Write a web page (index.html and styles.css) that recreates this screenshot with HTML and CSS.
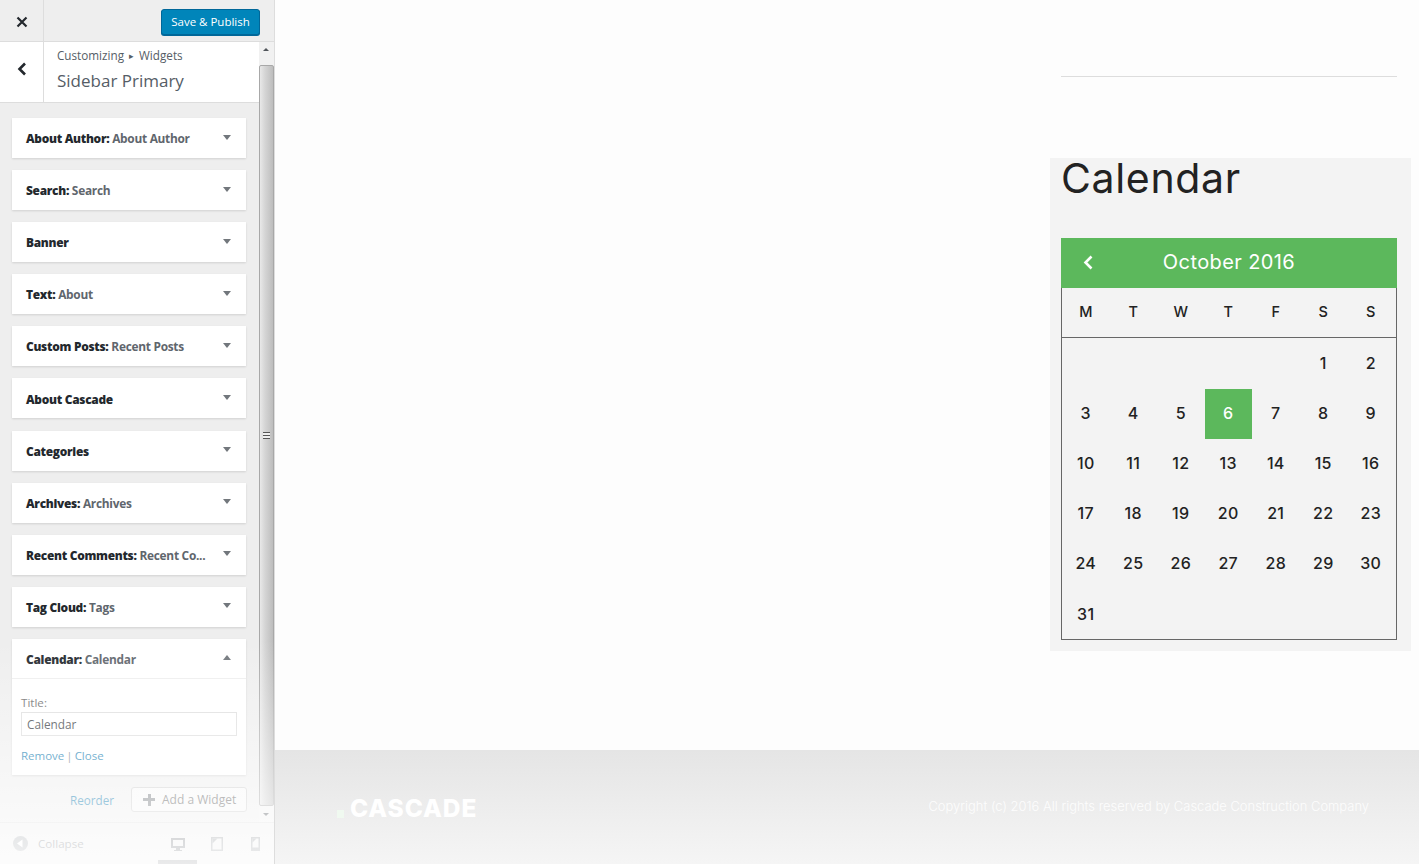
FILE: index.html
```html
<!DOCTYPE html>
<html lang="en">
<head>
    <meta charset="UTF-8">
    <title>Customize: Sidebar Primary</title>
    <link rel="stylesheet" href="styles.css">
</head>
<body>

<div class="app">
    <aside class="sidebar">
        <header class="top-bar">
            <a class="close-btn" href="#">
                <svg width="12" height="12" viewBox="0 0 12 12"><path d="M1.5 1.5l9 9M10.5 1.5l-9 9" stroke="#23282d" stroke-width="2.2" fill="none"/></svg>
            </a>
            <button class="publish-btn" type="button">Save &amp; Publish</button>
        </header>

        <div class="scroll-wrap">
            <div class="panel">
                <div class="panel-head">
                    <a class="back-btn" href="#">
                        <svg width="10" height="14" viewBox="0 0 10 14"><path d="M8 1.5L2.5 7L8 12.5" stroke="#23282d" stroke-width="2.6" fill="none"/></svg>
                    </a>
                    <div class="panel-title">
                        <div class="crumbs">Customizing <span class="crumb-sep">&#9656;</span> Widgets</div>
                        <div class="panel-name">Sidebar Primary</div>
                    </div>
                </div>

                <ul class="widgets">
                    <li class="widget"><div class="widget-top"><span><b>About Author:</b> About Author</span><i class="arrow"></i></div></li>
                    <li class="widget"><div class="widget-top"><span><b>Search:</b> Search</span><i class="arrow"></i></div></li>
                    <li class="widget"><div class="widget-top"><span><b>Banner</b></span><i class="arrow"></i></div></li>
                    <li class="widget"><div class="widget-top"><span><b>Text:</b> About</span><i class="arrow"></i></div></li>
                    <li class="widget"><div class="widget-top"><span><b>Custom Posts:</b> Recent Posts</span><i class="arrow"></i></div></li>
                    <li class="widget"><div class="widget-top"><span><b>About Cascade</b></span><i class="arrow"></i></div></li>
                    <li class="widget"><div class="widget-top"><span><b>Categories</b></span><i class="arrow"></i></div></li>
                    <li class="widget"><div class="widget-top"><span><b>Archives:</b> Archives</span><i class="arrow"></i></div></li>
                    <li class="widget"><div class="widget-top"><span><b>Recent Comments:</b> Recent Co...</span><i class="arrow"></i></div></li>
                    <li class="widget"><div class="widget-top"><span><b>Tag Cloud:</b> Tags</span><i class="arrow"></i></div></li>
                    <li class="widget">
                        <div class="widget-top open"><span><b>Calendar:</b> Calendar</span><i class="arrow up"></i></div>
                        <div class="widget-body">
                            <label class="field-label" for="title">Title:</label>
                            <input class="field" id="title" type="text" value="Calendar">
                            <div class="widget-links"><a href="#">Remove</a> | <a href="#">Close</a></div>
                        </div>
                    </li>
                </ul>

                <div class="widget-actions">
                    <a class="reorder" href="#">Reorder</a>
                    <button class="add-btn" type="button"><span class="plus"></span>Add a Widget</button>
                </div>
            </div>

            <div class="scrollbar">
                <i class="sb-arrow"></i>
                <div class="sb-thumb"><span class="sb-grip"></span></div>
                <i class="sb-arrow down"></i>
            </div>
        </div>

        <footer class="side-foot">
            <a class="collapse" href="#">
                <svg width="15" height="15" viewBox="0 0 15 15"><circle cx="7.5" cy="7.5" r="7.5" fill="#a0a5aa"/><path d="M9.5 3.5v8L4 7.5z" fill="#fff"/></svg>
                Collapse
            </a>
            <div class="devices">
                <span class="device active">
                    <svg width="16" height="15" viewBox="0 0 16 15"><path d="M1 1h14v10H1zM3 3v6h10V3zM6 11h4v2h2v1H4v-1h2z" fill="#656a70" fill-rule="evenodd"/></svg>
                </span>
                <span class="device">
                    <svg width="12" height="14" viewBox="0 0 12 14"><path d="M0 0h12v14H0zM1.5 1.5v11h9v-11z" fill="#8a8f94" fill-rule="evenodd"/><path d="M1.5 1.5h5l-5 5z" fill="#8a8f94"/></svg>
                </span>
                <span class="device">
                    <svg width="9" height="14" viewBox="0 0 9 14"><path d="M0 0h9v14H0zM1.5 1.5v9h6v-9z" fill="#8a8f94" fill-rule="evenodd"/><path d="M1.5 1.5h4l-4 4z" fill="#8a8f94"/></svg>
                </span>
            </div>
        </footer>
        <div class="side-fade"></div>
    </aside>

    <main class="preview">
        <div class="preview-main">
            <div class="right-col">
                <hr class="divider">
                <section class="cal-widget">
                    <h2 class="cal-title">Calendar</h2>
                    <div class="calendar">
                        <div class="cal-head">
                            <svg class="cal-prev" width="11" height="15" viewBox="0 0 11 15"><path d="M8.5 1.5L2.5 7.5l6 6" stroke="#fff" stroke-width="2.6" fill="none"/></svg>
                            October 2016
                        </div>
                        <div class="cal-grid cal-days">
                            <span>M</span><span>T</span><span>W</span><span>T</span><span>F</span><span>S</span><span>S</span>
                        </div>
                        <div class="cal-grid cal-dates">
                            <span></span><span></span><span></span><span></span><span></span><span>1</span><span>2</span>
                            <span>3</span><span>4</span><span>5</span><span class="today">6</span><span>7</span><span>8</span><span>9</span>
                            <span>10</span><span>11</span><span>12</span><span>13</span><span>14</span><span>15</span><span>16</span>
                            <span>17</span><span>18</span><span>19</span><span>20</span><span>21</span><span>22</span><span>23</span>
                            <span>24</span><span>25</span><span>26</span><span>27</span><span>28</span><span>29</span><span>30</span>
                            <span>31</span>
                        </div>
                    </div>
                </section>
            </div>
        </div>
        <footer class="site-foot">
            <div class="logo"><i class="logo-dot"></i>CASCADE</div>
            <div class="copyright">Copyright (c) 2016 All rights reserved by Cascade Construction Company</div>
        </footer>
    </main>
</div>

</body>
</html>
```

FILE: styles.css
```css
* {
    margin: 0;
    padding: 0;
    box-sizing: border-box;
}

body {
    font-family: 'Open Sans', sans-serif;
    background-color: #fdfdfd;
    overflow: hidden;
}

a {
    text-decoration: none;
}

.app {
    display: flex;
    height: 864px;
}

/* customizer sidebar */
.sidebar {
    position: relative;
    width: 275px;
    flex-shrink: 0;
    display: flex;
    flex-direction: column;
    background-color: #eeeeee;
    border-right: 1px solid #dddddd;
}

.top-bar {
    height: 42px;
    display: flex;
    justify-content: space-between;
    padding-right: 14px;
    border-bottom: 1px solid #dddddd;
}

.close-btn {
    width: 44px;
    height: 41px;
    display: flex;
    align-items: center;
    justify-content: center;
    padding-top: 2px;
    border-right: 1px solid #dddddd;
}

.publish-btn {
    width: 99px;
    height: 26px;
    margin-top: 9px;
    padding-bottom: 2px;
    background-color: #0085ba;
    color: #fff;
    border: 1px solid #006799;
    border-radius: 3px;
    font-family: 'Open Sans', sans-serif;
    font-size: 11.5px;
    box-shadow: 0 1px 0 #006799;
}

.scroll-wrap {
    flex: 1;
    display: flex;
    min-height: 0;
}

.panel {
    flex: 1;
    min-width: 0;
}

.panel-head {
    height: 61px;
    display: flex;
    background-color: #fff;
    border-bottom: 1px solid #dddddd;
}

.back-btn {
    width: 44px;
    display: flex;
    align-items: center;
    justify-content: center;
    padding: 0 0 6px 1px;
    border-right: 1px solid #dddddd;
}

.panel-title {
    padding: 5px 0 0 13px;
    color: #555d66;
}

.crumbs {
    font-size: 11.7px;
    line-height: 17px;
}

.crumb-sep {
    font-size: 9px;
    padding: 0 2px;
    vertical-align: 1px;
}

.panel-name {
    font-size: 17px;
    line-height: 26px;
    margin-top: 4px;
    color: #555d66;
}

.widgets {
    list-style: none;
    padding: 15px 13px 0 12px;
}

.widget {
    margin-bottom: 12.1px;
    background-color: #fff;
    box-shadow: 0 1px 2px rgba(0, 0, 0, 0.12);
}

.widget-top {
    height: 40px;
    display: flex;
    align-items: center;
    justify-content: space-between;
    padding: 0.2px 15px 0 14px;
    font-size: 11.9px;
    font-weight: 700;
    letter-spacing: -0.28px;
    color: #5f666d;
    white-space: nowrap;
}

.widget-top b {
    color: #23282d;
}

.widget-top.open {
    border-bottom: 1px solid #eeeeee;
}

.arrow {
    width: 0;
    height: 0;
    border-left: 4px solid transparent;
    border-right: 4px solid transparent;
    border-top: 5px solid #72777c;
    margin-bottom: 2px;
}

.arrow.up {
    border-top: none;
    border-bottom: 5px solid #72777c;
}

.widget-body {
    height: 96px;
    padding: 17px 9px 0 9px;
}

.field-label {
    display: block;
    font-size: 11.6px;
    line-height: 14px;
    color: #666666;
}

.field {
    display: block;
    width: 100%;
    height: 24px;
    margin-top: 2px;
    padding: 1px 5px 0;
    border: 1px solid #dddddd;
    font-family: 'Open Sans', sans-serif;
    font-size: 11.8px;
    color: #32373c;
}

.widget-links {
    margin-top: 11px;
    font-size: 11.5px;
    line-height: 17px;
    word-spacing: -1px;
    color: #72777c;
}

.widget-links a,
.reorder {
    color: #0073aa;
}

.widget-actions {
    display: flex;
    justify-content: flex-end;
    align-items: center;
    padding-right: 12px;
    gap: 17px;
}

.reorder {
    font-size: 11.7px;
}

.add-btn {
    width: 116px;
    height: 25px;
    display: flex;
    align-items: center;
    gap: 7px;
    padding-left: 11px;
    background-color: #f7f7f7;
    border: 1px solid #cccccc;
    border-radius: 3px;
    font-family: 'Open Sans', sans-serif;
    font-size: 12px;
    color: #555555;
}

.plus {
    width: 12px;
    height: 12px;
    background:
        linear-gradient(#72777c, #72777c) center / 12px 3px no-repeat,
        linear-gradient(#72777c, #72777c) center / 3px 12px no-repeat;
}

/* fake scrollbar */
.scrollbar {
    width: 15px;
    display: flex;
    flex-direction: column;
    background-color: #f1f1f1;
}

.sb-arrow {
    position: relative;
    height: 23px;
}

.sb-arrow.down {
    height: 16px;
}

.sb-arrow::after {
    content: "";
    position: absolute;
    left: 4px;
    top: 6px;
    border-left: 3px solid transparent;
    border-right: 3px solid transparent;
    border-bottom: 3px solid #50555a;
}

.sb-arrow.down::after {
    top: 7px;
    border-bottom: none;
    border-top: 3px solid #50555a;
}

.sb-thumb {
    flex: 1;
    display: flex;
    align-items: center;
    justify-content: center;
    border: 1px solid #a8a8a8;
    border-radius: 2px;
    background: linear-gradient(to right, #e8e8e8, #d4d4d4 40%, #bdbdbd);
}

.sb-grip {
    width: 7px;
    height: 7px;
    background: repeating-linear-gradient(#555 0 1px, #eeeeee 1px 3px);
}

.side-foot {
    height: 42px;
    display: flex;
    align-items: center;
    justify-content: space-between;
    border-top: 1px solid #dddddd;
    background-color: #eeeeee;
}

.collapse {
    display: flex;
    align-items: center;
    gap: 10px;
    padding-left: 13px;
    font-size: 11.6px;
    color: #656a70;
}

.devices {
    display: flex;
    align-self: stretch;
    margin-right: -1px;
}

.device {
    width: 39px;
    display: flex;
    align-items: center;
    justify-content: center;
    padding-top: 1px;
}

.device.active {
    border-bottom: 4px solid #72777c;
    padding-top: 5px;
}

.side-fade {
    position: absolute;
    left: 0;
    right: 0;
    top: 640px;
    bottom: 0;
    background: linear-gradient(rgba(255, 255, 255, 0), rgba(255, 255, 255, 0.85));
    pointer-events: none;
}

/* site preview */
.preview {
    flex: 1;
    min-width: 0;
    display: flex;
    flex-direction: column;
}

.preview-main {
    flex: 1;
    display: flex;
    justify-content: flex-end;
    padding-right: 8px;
}

.right-col {
    width: 361px;
    padding-top: 76px;
}

.divider {
    border: none;
    border-top: 1px solid #dddddd;
    margin: 0 14px 0 11px;
}

.cal-widget {
    margin-top: 81px;
    height: 493px;
    padding: 0 14px 0 11px;
    background-color: #f3f3f3;
}

.cal-title {
    height: 80px;
    font-family: 'Inter', sans-serif;
    font-size: 41px;
    font-weight: 400;
    line-height: 40px;
    letter-spacing: 0.65px;
    color: #222222;
}

.calendar {
    height: 402px;
    border: 1px solid #666666;
    border-top: none;
    color: #222222;
    font-family: 'Inter', sans-serif;
}

.cal-head {
    position: relative;
    height: 50px;
    margin: 0 -1px;
    display: flex;
    align-items: center;
    justify-content: center;
    padding-bottom: 2px;
    background-color: #5cb85c;
    color: #fff;
    font-size: 20px;
    letter-spacing: 0.4px;
}

.cal-prev {
    position: absolute;
    left: 22px;
    top: 17px;
}

.cal-grid {
    display: grid;
    grid-template-columns: repeat(7, 1fr);
    text-align: center;
    padding-right: 1.5px;
}

.cal-days {
    height: 50px;
    align-items: center;
    padding-bottom: 2px;
    border-bottom: 1px solid #666666;
    font-size: 14.5px;
    font-weight: 500;
}

.cal-dates {
    padding-top: 0.5px;
    grid-auto-rows: 50.2px;
    font-size: 16px;
    font-weight: 500;
    letter-spacing: 0.3px;
}

.cal-dates span {
    display: flex;
    align-items: center;
    justify-content: center;
    padding-bottom: 2px;
}

.cal-dates .today {
    background-color: #5cb85c;
    color: #fff;
}

.site-foot {
    height: 114px;
    display: flex;
    align-items: center;
    justify-content: space-between;
    padding: 0 50px 0 62px;
    background: linear-gradient(#e5e5e5, #f5f5f5);
    color: #fff;
}

.logo {
    display: flex;
    align-items: flex-end;
    padding-top: 2px;
    font-family: 'Inter', sans-serif;
    font-size: 24.5px;
    font-weight: 800;
    line-height: 20px;
    letter-spacing: 0.9px;
}

.logo-dot {
    width: 7px;
    height: 8px;
    margin: 0 6px 0 0;
    background-color: #f0f9f0;
}

.copyright {
    font-family: 'Inter', sans-serif;
    font-size: 12.95px;
    font-weight: 300;
    color: rgba(255, 255, 255, 0.9);
    padding-bottom: 3px;
}
```
